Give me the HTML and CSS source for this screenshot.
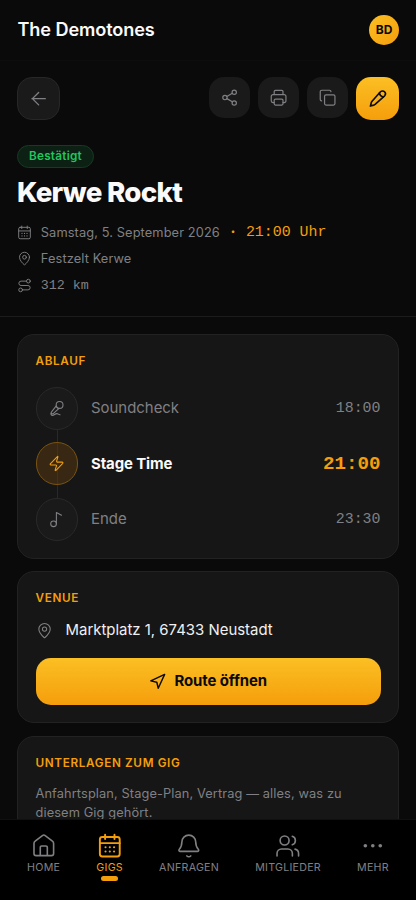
FILE: index.html
```html
<!DOCTYPE html>
<html lang="de">
<head>
<meta charset="utf-8">
<meta name="viewport" content="width=device-width, initial-scale=1">
<title>The Demotones</title>
<link rel="stylesheet" href="styles.css">
</head>
<body>
<svg class="sprite" aria-hidden="true">
  <symbol id="calendar" viewBox="0 0 24 24"><rect x="2.7" y="3.7" width="18.6" height="18.3" rx="2.3"/><path d="M2.7 9.5h18.6M7.6 1.7v4M16.4 1.7v4"/><path class="dots" d="M8 13.4h.01M12 13.4h.01M16 13.4h.01M8 17.4h.01M12 17.4h.01M16 17.4h.01"/></symbol>
  <symbol id="pin" viewBox="0 0 24 24"><path d="M20 10c0 5-5.500 10.200-7.400 11.800a1 1 0 0 1-1.200 0C9.500 20.200 4 15 4 10a8 8 0 0 1 16 0z"/><circle cx="12" cy="10" r="3"/></symbol>
</svg>
<header class="topbar"><span class="brand">The Demotones</span><span class="avatar">BD</span></header>
<main>
  <section class="hero">
    <div class="actions">
      <button class="btn back" aria-label="Zurück"><svg viewBox="0 0 24 24"><path d="M19.500 12H4.500M12 19l-7-7 7-7"/></svg></button>
      <button class="btn small" aria-label="Teilen"><svg viewBox="0 0 24 24"><circle cx="17.800" cy="5.300" r="2.700"/><circle cx="6.200" cy="12" r="2.700"/><circle cx="17.800" cy="18.700" r="2.700"/><path d="M8.600 10.700l6.800-4M8.600 13.300l6.800 4"/></svg></button>
      <button class="btn small" aria-label="Drucken"><svg viewBox="0 0 24 24"><path d="M6.500 8.200V4.400a1.500 1.500 0 0 1 1.500-1.500h8a1.500 1.500 0 0 1 1.500 1.500v3.800M6.500 18.200H5a2.200 2.200 0 0 1-2.200-2.200v-5.600A2.200 2.200 0 0 1 5 8.200h14a2.200 2.200 0 0 1 2.200 2.200V16a2.200 2.200 0 0 1-2.200 2.200h-1.500"/><rect x="6.500" y="13.800" width="11" height="7.500" rx="1.500"/></svg></button>
      <button class="btn small" aria-label="Kopieren"><svg viewBox="0 0 24 24"><rect x="8.200" y="8.500" width="13" height="12.800" rx="1.900"/><path d="M4.500 16.200a1.800 1.800 0 0 1-1.700-1.800V4.700a1.900 1.900 0 0 1 1.900-1.900h9.700a1.800 1.800 0 0 1 1.800 1.700"/></svg></button>
      <button class="btn edit" aria-label="Bearbeiten"><svg viewBox="0 0 24 24"><path d="M15.200 4.200L5.700 15c-.4.500-.7 1-.9 1.600l-1 3.800 3.700-1.100c.6-.2 1.100-.5 1.600-.9l10.800-9.600c1.100-1.200 1.100-3.200-.1-4.500s-3.400-1.300-4.600-.1z"/><path d="M14 5.800c.4 2.200 1.900 3.800 4.200 4.300"/></svg></button>
    </div>
    <span class="status">Bestätigt</span>
    <h1>Kerwe Rockt</h1>
    <ul class="meta">
      <li><svg><use href="#calendar"/></svg><span>Samstag, 5. September 2026</span><span class="start"><span class="sep">·</span><span class="mono">21:00 Uhr</span></span></li>
      <li><svg><use href="#pin"/></svg><span>Festzelt Kerwe</span></li>
      <li><svg viewBox="0 0 24 24"><circle cx="5.800" cy="19" r="3"/><path d="M9 19h8.500a3.500 3.500 0 0 0 0-7h-11a3.500 3.500 0 0 1 0-7H15"/><circle cx="18.200" cy="5" r="3"/></svg><span class="mono km">312 km</span></li>
    </ul>
  </section>
  <div class="cards">
    <section class="card">
      <h2>Ablauf</h2>
      <ol class="timeline">
        <li><span class="node"><svg viewBox="0 0 24 24"><circle cx="16.300" cy="7" r="4.800"/><path d="M11.600 8.200L5 16.700c-.7 1-.6 1.800 0 2.400s1.500.6 2.400 0l8.100-7.300M12.600 10l1.500 1.500M4.800 16.900c-1.300 1.500-1 4.700 1.200 4.800 2.800.1 3.700-2.500 6.500-2.500 1.900 0 2.300 1.700 4.500 1.500"/></svg></span><span class="name">Soundcheck</span><time class="mono">18:00</time></li>
        <li class="main"><span class="node"><svg viewBox="0 0 24 24"><path d="M4 14a1 1 0 0 1-.78-1.630l9.900-10.200a.5.5 0 0 1 .86.460l-1.920 6.020A1 1 0 0 0 13 10h7a1 1 0 0 1 .78 1.630l-9.900 10.200a.5.5 0 0 1-.86-.46l1.920-6.020A1 1 0 0 0 11 14z"/></svg></span><span class="name">Stage Time</span><time class="mono">21:00</time></li>
        <li><span class="node"><svg viewBox="0 0 24 24"><circle cx="7.800" cy="18" r="4"/><path d="M11.800 18V2l7.200 4"/></svg></span><span class="name">Ende</span><time class="mono">23:30</time></li>
      </ol>
    </section>
    <section class="card">
      <h2>Venue</h2>
      <p class="address"><svg><use href="#pin"/></svg>Marktplatz 1, 67433 Neustadt</p>
      <button class="route"><svg viewBox="0 0 24 24"><path d="M2.500 11L22 2l-9 19.500L11 13z"/></svg>Route öffnen</button>
    </section>
    <section class="card docs">
      <h2>Unterlagen zum Gig</h2>
      <p>Anfahrtsplan, Stage-Plan, Vertrag — alles, was zu diesem Gig gehört.</p>
    </section>
  </div>
</main>
<nav class="tabs">
  <a><svg viewBox="0 0 24 24"><path d="M2.800 9.800c0-.9.4-1.700 1.100-2.200l6.800-5.200c.8-.6 1.800-.6 2.600 0l6.800 5.200c.7.500 1.100 1.300 1.100 2.200v9.400a2 2 0 0 1-2 2H4.800a2 2 0 0 1-2-2zM8.700 21v-7.500a1.300 1.300 0 0 1 1.300-1.300h4a1.300 1.300 0 0 1 1.300 1.300V21"/></svg>Home</a>
  <a class="active"><svg><use href="#calendar"/></svg>Gigs</a>
  <a><svg viewBox="0 0 24 24"><path d="M12 2a6.500 6.500 0 0 0-6.500 6.500c0 3.800-1 5.300-2.400 6.700-.8.900-.3 2 .9 2h16c1.200 0 1.700-1.100.9-2-1.400-1.400-2.400-2.900-2.400-6.700A6.500 6.500 0 0 0 12 2zM10.200 21.500c1 1.100 2.600 1.100 3.600 0"/></svg>Anfragen</a>
  <a><svg viewBox="0 0 24 24"><circle cx="9" cy="7" r="4.200"/><path d="M1.900 21.500v-2.300a4.200 4.200 0 0 1 4.200-4.200h6a4.200 4.200 0 0 1 4.200 4.200v2.300M16.200 3a4.200 4.200 0 0 1 0 8M18.800 15.100a4.200 4.200 0 0 1 3.300 4.100v2.300"/></svg>Mitglieder</a>
  <a><svg class="more" viewBox="0 0 24 24"><circle cx="5" cy="12" r="1.700"/><circle cx="12" cy="12" r="1.700"/><circle cx="19" cy="12" r="1.700"/></svg>Mehr</a>
</nav>
</body>
</html>
```
FILE: styles.css
```css
* { box-sizing: border-box; }
body {
  margin: 0;
  height: 900px;
  overflow: hidden;
  display: flex;
  flex-direction: column;
  background: #0a0a0a;
  color: #fafafa;
  font-family: Inter, sans-serif;
}
h1, h2, p, ul, ol { margin: 0; padding: 0; }
li { list-style: none; }
svg { fill: none; stroke: currentColor; stroke-width: 1.5; stroke-linecap: round; stroke-linejoin: round; flex: none; display: block; }
.sprite { position: absolute; width: 0; height: 0; }
.dots { stroke-width: 2; }
button { font-family: inherit; padding: 0; border: 0; }
.mono { font-family: "Liberation Mono", monospace; }

.topbar {
  height: 60.500px;
  flex: none;
  padding: 0 17px 0 17.500px;
  display: flex;
  align-items: center;
  justify-content: space-between;
  border-bottom: 1px solid #0d0d0d;
}
.brand { font-size: 18.130px; font-weight: 600; letter-spacing: -0.100px; line-height: 24px; margin-top: -2px; }
.avatar {
  width: 30px; height: 30px; border-radius: 50%;
  display: grid; place-items: center;
  background: linear-gradient(135deg, #fbbf24, #f59e0b);
  color: #0a0a0a; font-size: 12px; font-weight: 700;
}

main { flex: 1; min-height: 0; overflow: hidden; }
.hero { height: 256.500px; padding: 16.500px 17px 0; border-bottom: 1px solid #1c1c1c; }
.actions { display: flex; gap: 8.500px; align-items: flex-start; }
.btn { display: grid; place-items: center; background: #1a1a1a; color: #808084; }
.back { width: 43px; height: 42.700px; border-radius: 15px; border: 1px solid #272727; margin-right: auto; }
.back svg, .edit svg { width: 21.300px; height: 21.300px; }
.small { width: 40.500px; height: 40.500px; border-radius: 15px; }
.small svg { width: 19.200px; height: 19.200px; }
.edit { width: 43px; height: 42.700px; border-radius: 15px; background: linear-gradient(#fbbf24, #f59e0b); color: #0a0a0a; }
.edit svg { stroke-width: 1.800; }

.status {
  display: flex; align-items: center; justify-content: center;
  width: 77px; height: 23px; margin-top: 25px;
  border: 1px solid #123d21; border-radius: 12px;
  background: #0c2013; color: #22c55e;
  font-size: 11.730px; font-weight: 600; letter-spacing: 0.250px;
}
h1 { font-size: 27.730px; line-height: 34px; font-weight: 800; letter-spacing: -0.700px; margin-top: 7px; }
.meta { margin-top: 12.600px; display: grid; gap: 4.500px; }
.meta li { height: 22px; display: flex; align-items: center; color: #808084; font-size: 12.800px; letter-spacing: 0.110px; }
.meta svg { width: 15px; height: 15px; margin-right: 8.800px; }
.start { display: flex; align-items: center; color: #f59e0b; font-size: 14.930px; letter-spacing: 0; margin-left: 10.500px; }
.sep { font-weight: 700; width: 15.500px; }
.km { font-size: 13.330px; letter-spacing: 0; }

.cards { padding: 16.500px 17px 0; display: grid; gap: 12.800px; }
.card { border: 1px solid #222; border-radius: 17px; background: #161616; padding: 17px 17.500px; }
h2 { color: #f59e0b; font-size: 11.730px; line-height: 18px; font-weight: 600; letter-spacing: 0.650px; text-transform: uppercase; }
.timeline { display: grid; gap: 12.800px; margin-top: 17.500px; }
.timeline li { display: flex; align-items: center; height: 42.700px; color: #808084; }
.node { width: 42.700px; height: 42.700px; border-radius: 50%; display: grid; place-items: center; border: 1px solid #292929; background: #1a1a1a; margin-right: 12.800px; position: relative; }
.node svg { width: 17.070px; height: 17.070px; }
.timeline li:not(:last-child) .node::after { content: ""; position: absolute; left: 20px; top: 42px; width: 1px; height: 12.800px; background: #292929; }
.name { flex: 1; font-size: 14.930px; }
.timeline time { font-size: 14.930px; }
.timeline .main { color: #fafafa; }
.main .name { font-weight: 700; letter-spacing: -0.100px; }
.timeline .main time { font-size: 19.200px; font-weight: 700; color: #f59e0b; }
.main .node { background: linear-gradient(90deg, transparent 20px, #443116 20px 21px, transparent 21px) #382813; border-color: #7b5311; color: #f59e0b; }
.address { display: flex; align-items: center; height: 24px; margin-top: 11px; font-size: 14.930px; color: #f0f0f0; }
.address svg { width: 17.070px; height: 17.070px; margin-right: 13px; color: #808084; }
.route {
  display: flex; width: 100%; height: 47px; margin-top: 15.500px;
  align-items: center; justify-content: center; gap: 8.500px;
  background: linear-gradient(#fbbf24, #f59e0b); border-radius: 15px;
  color: #0a0a0a; font-size: 14.930px; font-weight: 700; letter-spacing: -0.100px;
}
.route svg { width: 17.070px; height: 17.070px; stroke-width: 2; }
.docs { height: 180px; }
.docs p { color: #808084; font-size: 12.800px; letter-spacing: 0.110px; line-height: 19.500px; margin-top: 12px; }

.tabs {
  height: 81px; flex: none; padding: 12.500px 9px 0;
  display: flex; justify-content: space-around;
  background: #000; border-top: 1px solid #101010;
}
.tabs a { display: flex; flex-direction: column; align-items: center; color: #808084; font-size: 10.670px; line-height: 16px; letter-spacing: 0.250px; text-transform: uppercase; }
.tabs svg { width: 25.600px; height: 25.600px; margin-bottom: 2px; }
.tabs .more circle { fill: currentColor; stroke: none; }
.tabs .active { color: #f59e0b; }
.active::after { content: ""; width: 17px; height: 4.500px; border-radius: 3px; background: currentColor; }
.active svg { stroke-width: 1.800; }
.active .dots { stroke-width: 2.200; }
```
